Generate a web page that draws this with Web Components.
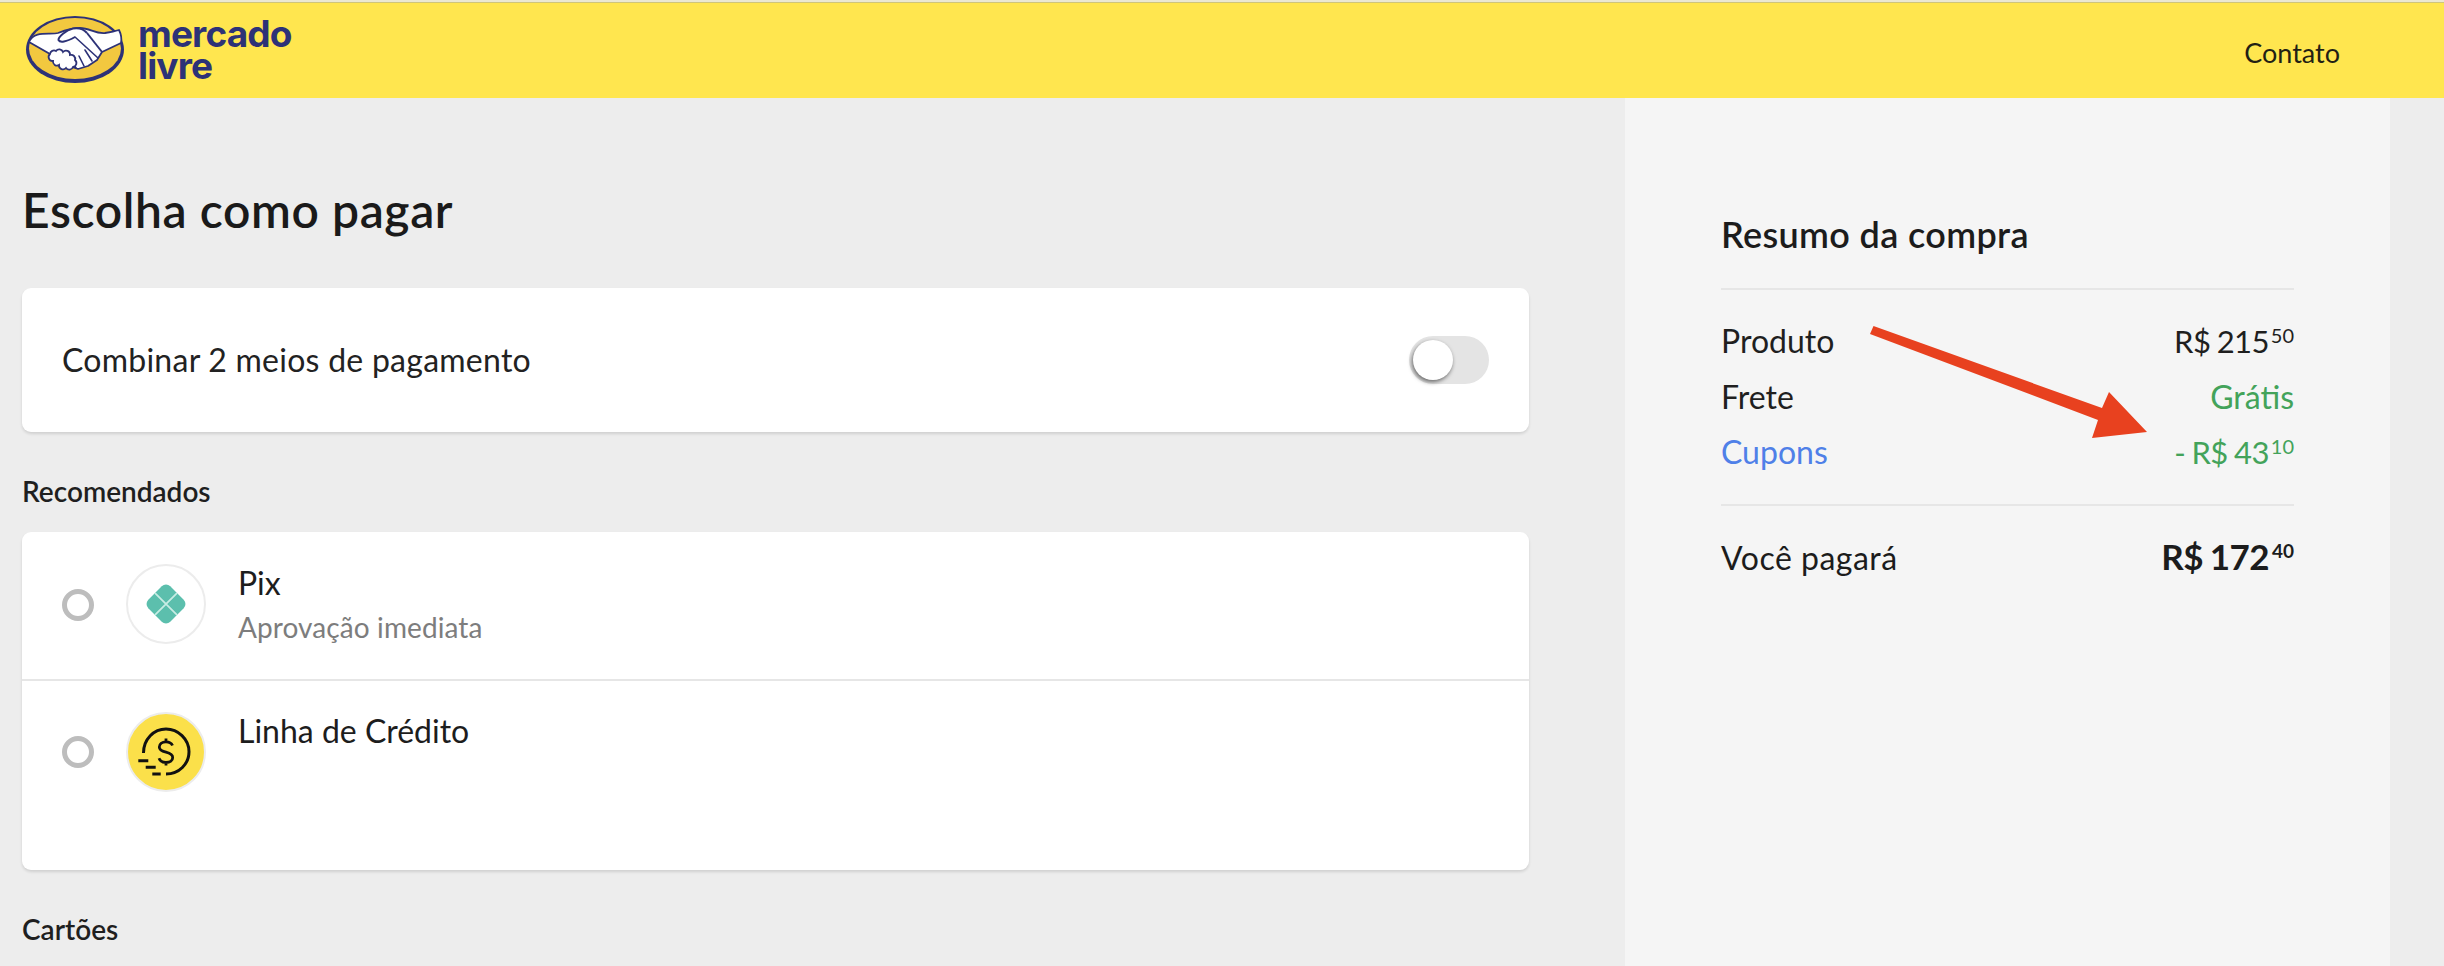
<!DOCTYPE html>
<html lang="pt-BR"><head><meta charset="utf-8"><title>Mercado Livre</title>
<style>
html,body{margin:0;padding:0;height:966px;overflow:hidden;background:#ededed;font-family:Lato,"Open Sans",sans-serif;color:#1a1a1a}
</style></head><body>
<ml-page>
  <ml-header slot="header" link="Contato"></ml-header>
  <ml-main>
    <ml-title>Escolha como pagar</ml-title>
    <ml-card kind="combo"><span>Combinar 2 meios de pagamento</span><ml-toggle></ml-toggle></ml-card>
    <ml-section>Recomendados</ml-section>
    <ml-card kind="list">
      <ml-pay-row icon="pix" subtitle="Aprovação imediata">Pix</ml-pay-row>
      <ml-pay-row icon="credit" tall>Linha de Crédito</ml-pay-row>
    </ml-card>
    <ml-section>Cartões</ml-section>
  </ml-main>
  <ml-summary slot="aside">
    <ml-sum-row label="Produto"><ml-price int="R$ 215" cents="50"></ml-price></ml-sum-row>
    <ml-sum-row label="Frete" tone="green">Grátis</ml-sum-row>
    <ml-sum-row label="Cupons" tone="green" labeltone="blue"><ml-price int="- R$ 43" cents="10"></ml-price></ml-sum-row>
  </ml-summary>
</ml-page>
<script>
function def(name, html, extra){
  const t=document.createElement('template');t.innerHTML=html;
  customElements.define(name,class extends HTMLElement{
    constructor(){super();this.attachShadow({mode:'open'}).appendChild(t.content.cloneNode(true));}
    connectedCallback(){extra&&extra(this,this.shadowRoot);}
  });
}
def('ml-page',`<style>
:host{display:block;width:2444px;height:966px;overflow:hidden}
.top{height:2px;background:#ebe8d2;border-bottom:1px solid #cfc57a}
.body{display:flex;height:868px}
.left{width:1625px;flex:none}
.right{width:765px;flex:none}
</style>
<div class="top"></div>
<slot name="header"></slot>
<div class="body"><div class="left"><slot></slot></div><div class="right"><slot name="aside"></slot></div></div>`);

def('ml-header',`<style>
:host{display:flex;align-items:center;justify-content:space-between;height:95px;background:#ffe64f;box-sizing:border-box;padding:0 104px 0 24px}
.brand{display:flex;align-items:center;gap:10px}
svg{display:block;width:104px;height:76px}
.word{font:700 37px/32px Inter,sans-serif;letter-spacing:-.85px;color:#2d3277;margin-top:-2px;white-space:pre-line}
.link{font:400 27px/30px Lato,sans-serif;color:#231f14;margin-top:5px}
</style>
<div class="brand">
<svg viewBox="24 13 104 76" aria-hidden="true">
 <ellipse cx="75" cy="49.500" rx="49" ry="33.500" fill="#2d3277"/>
 <ellipse cx="75" cy="48.500" rx="46" ry="30.500" fill="#f2c83f"/>
 <path d="M29 42C34 30 50 35 58 33C66 30 72 28 80 28C90 28 95 34 105 33C112 32 116 31 119 30C121 34 122 38 121 43L102 52L97 60L88 66L78 69L72 67L60 62L50 54Z" fill="#fff" stroke="#2d3277" stroke-width="1.800" stroke-linejoin="round"/>
 <path d="M87 33L102 52" fill="none" stroke="#2d3277" stroke-width="2"/>
 <path d="M75 37C66 42 60 43 58.500 40C58 37 66 30 73 28.500C79 27.500 84 29.500 87 33" fill="#fff" stroke="#2d3277" stroke-width="2" stroke-linejoin="round"/>
 <path d="M75 37L98 58M85 50L92 61M79 56L84 66M71 60L76 68" fill="none" stroke="#2d3277" stroke-width="1.600" stroke-linecap="round"/>
 <path d="M50 54a4 4 0 0 1 6-3a4 4 0 0 1 7 1a4 4 0 0 1 7 3a4 4 0 0 1 5 5a4 4 0 0 1-2 7a4 4 0 0 1-7 1a4 4 0 0 1-7-3a4 4 0 0 1-6-4a4 4 0 0 1-3-7z" fill="#fff" stroke="#2d3277" stroke-width="1.800"/>
</svg>
<div class="word">mercado
livre</div>
</div>
<div class="link"></div>`,(h,s)=>{s.querySelector('.link').textContent=h.getAttribute('link')});

def('ml-main',`<style>:host{display:block;padding:0 0 0 22px;width:1507px}</style><slot></slot>`);

def('ml-title',`<style>:host{display:block;font:600 48px/50px Lato,sans-serif;letter-spacing:.6px;color:#1a1a1a;padding-top:87px;margin-bottom:53px}</style><slot></slot>`);

def('ml-section',`<style>:host{display:block;font:600 28px/30px Lato,sans-serif;color:#1f1f1f;margin:44px 0 26px}</style><slot></slot>`);

def('ml-card',`<style>
:host{display:block;background:#fff;border-radius:9px;box-shadow:0 2px 3px rgba(0,0,0,.12)}
:host([kind=combo]){display:flex;align-items:center;justify-content:space-between;height:144px;box-sizing:border-box;padding:0 40px;font:400 32px/36px Lato,sans-serif;letter-spacing:.25px;color:#222}
</style><slot></slot>`);

def('ml-toggle',`<style>
:host{display:block;position:relative;width:80px;height:48px;background:#e4e4e4;border-radius:24px}
i{position:absolute;left:4px;top:4px;width:40px;height:40px;border-radius:50%;background:#fff;box-shadow:-1px 2px 4px rgba(0,0,0,.55)}
</style><i></i>`);

const ICONS={
pix:`<svg viewBox="0 0 80 80" width="80" height="80"><g transform="rotate(45 40 40)">
<rect x="24.500" y="24.500" width="31" height="31" rx="6" fill="#5cbfad"/>
<path d="M24.500 40H55.500M40 24.500V55.500" stroke="#c8ece4" stroke-width="1.700" fill="none"/>
</g></svg>`,
credit:`<svg viewBox="0 0 80 80" width="80" height="80"><g fill="none" stroke="#111" stroke-width="3">
<path d="M17.500 41C17.500 27 28 17 40 17C52 17 63 27 63 39.700C63 52 53 62 40 62"/>
<path d="M12.300 48.700H22.300M19.700 55.300H29.700M26.300 62H34.700"/>
<path d="M46.500 33.500C45.500 31 43 29.800 40 29.800C36 29.800 33.300 32 33.300 35C33.300 38 36 39.200 40 40.200C44 41.200 46.700 42.400 46.700 45.500C46.700 48.500 44 50.500 40 50.500C36.500 50.500 34 49 33 46.300M40 26.500V29.800M40 50.500V53.500" stroke-width="2.800"/>
</g></svg>`};
def('ml-pay-row',`<style>
:host{display:flex;align-items:flex-start;height:147px;border-bottom:2px solid #e6e6e6;padding-left:40px}
:host([tall]){height:189px;border-bottom:0}
.radio{flex:none;width:32px;height:32px;box-sizing:border-box;border:5px solid #bdbdbd;border-radius:50%;margin-top:57px}
.ic{flex:none;width:80px;height:80px;box-sizing:border-box;border-radius:50%;border:2px solid #ececec;margin:32px 0 0 32px;display:flex;align-items:center;justify-content:center;overflow:hidden}
.ic svg{flex:none}
:host([tall]) .radio{margin-top:55px}
:host([tall]) .ic{margin-top:31px;background:#fbe04a}
.t{margin-left:32px;padding-top:31px}
:host([tall]) .t{padding-top:30px}
.a{font:400 32px/40px Lato,sans-serif;color:#1d1d1d}
.b{font:400 28px/32px Lato,sans-serif;letter-spacing:.1px;color:#7d7d7d;margin-top:8px}
</style>
<div class="radio"></div><div class="ic"></div>
<div class="t"><div class="a"><slot></slot></div><div class="b"></div></div>`,(h,s)=>{
  s.querySelector('.ic').innerHTML=ICONS[h.getAttribute('icon')];
  const sub=h.getAttribute('subtitle');const b=s.querySelector('.b');
  if(sub)b.textContent=sub;else b.remove();
});

def('ml-summary',`<style>
:host{display:block;position:relative;height:868px;background:#f5f5f5;box-sizing:border-box;padding:0 96px}
h2{margin:0;font:600 36px/40px Lato,sans-serif;letter-spacing:.35px;color:#1c1c1c;padding-top:116px;padding-bottom:34px;border-bottom:2px solid #e6e6e6}
.rows{padding-top:23px;padding-bottom:24px;border-bottom:2px solid #e6e6e6}
.total{display:flex;justify-content:space-between;align-items:baseline;padding-top:30px;font:400 32px/40px Lato,sans-serif;letter-spacing:.5px;color:#1c1c1c}
.arrow{position:absolute;left:245px;top:228px;width:280px;height:114px}
</style>
<h2>Resumo da compra</h2>
<div class="rows"><slot></slot></div>
<div class="total"><span>Você pagará</span><ml-price int="R$ 172" cents="40" strong></ml-price></div>
<svg class="arrow" viewBox="1870 326 280 114" aria-hidden="true"><polygon fill="#e8411f" points="1873.500,326 2102,408 2109,392 2147,432 2092,438 2098,420 1870,334"/></svg>`);

def('ml-sum-row',`<style>
:host{display:flex;justify-content:space-between;align-items:baseline;font:400 32px/55px Lato,sans-serif;color:#1f1f1f}
:host([tone=green]) .v{color:#43a35a}
:host([labeltone=blue]) .l{color:#4f80e8}
</style><span class="l"></span><span class="v"><slot></slot></span>`,(h,s)=>{s.querySelector('.l').textContent=h.getAttribute('label')});

def('ml-price',`<style>
:host{display:inline;letter-spacing:-.6px;word-spacing:-1px;font-size:31px}
:host([strong]){font-weight:700;font-size:35px;letter-spacing:-.6px}
sup{font-size:20px;line-height:0;vertical-align:10px;margin-left:2px;letter-spacing:0}
:host([strong]) sup{font-size:19px;vertical-align:12px;margin-left:3px}
</style><span class="i"></span><sup class="c"></sup>`,(h,s)=>{s.querySelector('.i').textContent=h.getAttribute('int');s.querySelector('.c').textContent=h.getAttribute('cents')});
</script>
</body></html>
